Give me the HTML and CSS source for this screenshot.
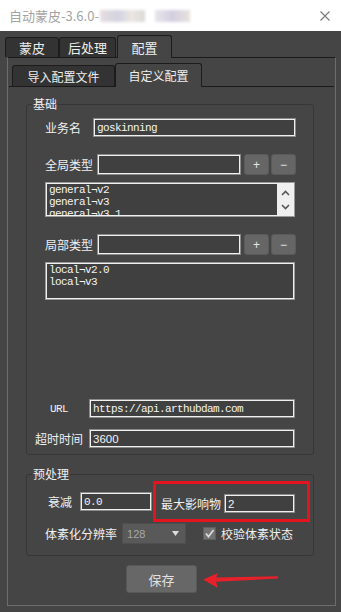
FILE: index.html
```html
<!DOCTYPE html>
<html>
<head>
  <title>自动蒙皮</title>
  <meta name="viewport" content="width=device-width, initial-scale=1.0" />
  <link rel="stylesheet" href="styles.css">
</head>
<body>

  <div class="titlebar">
    <span class="title">自动蒙皮-3.6.0-</span>
    <span class="blur b1"></span>
    <span class="blur b2"></span>
    <svg class="close" width="10" height="10" viewBox="0 0 10 10">
      <path d="M0.5 0.5 L9.5 9.5 M9.5 0.5 L0.5 9.5" stroke="#7a7a7a" stroke-width="1.1" fill="none"/>
    </svg>
  </div>

  <div class="tabs">
    <div class="tab t-skin">蒙皮</div>
    <div class="tab t-post">后处理</div>
    <div class="tab t-conf active">配置</div>
  </div>

  <div class="pane">
    <div class="subtabs">
      <div class="tab sub t-import">导入配置文件</div>
      <div class="tab sub t-custom active">自定义配置</div>
    </div>

    <div class="subpane">
      <div class="group basic">
        <div class="group-title">基础</div>

        <div class="row r-name">
          <span class="label l-name">业务名</span>
          <div class="field mono f-name">goskinning</div>
        </div>

        <div class="row r-type">
          <span class="label l-type">全局类型</span>
          <div class="field f-type"></div>
          <div class="btn">+</div>
          <div class="btn">−</div>
        </div>

        <div class="list list-global">
          <div class="list-items mono">
            <div>general¬v2</div>
            <div>general¬v3</div>
            <div>general¬v3.1</div>
          </div>
          <div class="scrollbar">
            <svg width="9" height="6" viewBox="0 0 9 6"><path d="M1 5 L4.5 1.5 L8 5" stroke="#555" stroke-width="1.6" fill="none"/></svg>
            <svg width="9" height="6" viewBox="0 0 9 6"><path d="M1 1 L4.5 4.5 L8 1" stroke="#555" stroke-width="1.6" fill="none"/></svg>
          </div>
        </div>

        <div class="row r-local">
          <span class="label l-type">局部类型</span>
          <div class="field f-type"></div>
          <div class="btn">+</div>
          <div class="btn">−</div>
        </div>

        <div class="list list-local">
          <div class="list-items mono">
            <div>local¬v2.0</div>
            <div>local¬v3</div>
          </div>
        </div>

        <div class="row r-url">
          <span class="label l-center mono-label">URL</span>
          <div class="field mono f-url">https://api.arthubdam.com</div>
        </div>

        <div class="row r-timeout">
          <span class="label l-center">超时时间</span>
          <div class="field sans f-url">3600</div>
        </div>
      </div>

      <div class="group pre">
        <div class="group-title">预处理</div>

        <div class="row r-decay">
          <span class="label l-decay">衰减</span>
          <div class="field mono f-small">0.0</div>
          <div class="highlight">
            <span class="label">最大影响物</span>
            <div class="field sans f-max">2</div>
          </div>
        </div>

        <div class="row r-voxel">
          <span class="label">体素化分辨率</span>
          <div class="combo">
            <span>128</span>
            <svg width="7" height="5" viewBox="0 0 7 5"><path d="M0 0 L7 0 L3.5 5 Z" fill="#dcdcdc"/></svg>
          </div>
          <div class="check">
            <svg width="11" height="11" viewBox="0 0 11 11"><path d="M2 5.5 L4.5 8.5 L9.5 2" stroke="#dadada" stroke-width="1.8" fill="none"/></svg>
          </div>
          <span class="label">校验体素状态</span>
        </div>
      </div>

      <div class="save-row">
        <div class="save">保存</div>
        <svg class="arrow" width="76" height="17" viewBox="0 0 76 17">
          <polygon points="0,7.5 15,1 13,5.6 75,4.2 75,6.6 13,9.8 15,16" fill="#e8202a"/>
        </svg>
      </div>
    </div>
  </div>

</body>
</html>
```

FILE: styles.css
```css
body {
  margin: 0;
  width: 341px;
  height: 612px;
  overflow: hidden;
  background: #454545;
  font-family: "Noto Sans CJK SC", sans-serif;
  font-size: 12px;
  color: #f0f0f0;
}

/* title bar */
.titlebar {
  height: 31px;
  background: #fff;
  display: flex;
  align-items: center;
  padding-left: 9px;
}

.title {
  color: #a3a3a3;
  font-size: 13px;
}

.blur {
  display: inline-block;
  height: 12px;
  filter: blur(1.6px);
}

.b1 {
  width: 45px;
  margin-left: 1px;
  background: linear-gradient(90deg, #e6dde0, #d3d3e0 40%, #ebe6e2 70%, #d9d9d9);
}

.b2 {
  width: 35px;
  margin-left: 10px;
  background: linear-gradient(90deg, #e6e6ea, #d4cee0 50%, #e6e2da);
}

.close {
  margin-left: auto;
  margin-right: 11px;
}

/* tabs */
.tabs, .subtabs {
  display: flex;
  align-items: flex-end;
}

.tabs {
  margin-top: 4px;
  padding-left: 5px;
}

.tab {
  box-sizing: border-box;
  height: 20px;
  display: flex;
  align-items: center;
  justify-content: center;
  background: #333;
  border: 1px solid #1c1c1c;
  border-bottom: none;
  border-radius: 3px 3px 0 0;
  color: #eee;
  font-size: 13px;
}

.tab.active {
  height: 23px;
  margin-bottom: -1px;
  background: #454545;
  position: relative;
}

.t-skin { width: 54px; }
.t-post { width: 57px; }
.t-conf { width: 55px; margin-left: 1px; }

.pane {
  box-sizing: border-box;
  width: 329px;
  height: 549px;
  margin-left: 7px;
  border: 1px solid #6c6c6c;
  border-top-color: #1a1a1a;
}

.subtabs {
  padding: 5px 0 0 4px;
}

.tab.sub {
  height: 21px;
  font-size: 12px;
}

.tab.sub.active {
  height: 24px;
}

.t-import { width: 103px; }
.t-custom { width: 87px; }

.subpane {
  margin: 0 1px;
  border-top: 1px solid #1a1a1a;
}

/* group boxes */
.group {
  position: relative;
  box-sizing: border-box;
  width: 288px;
  margin-left: 17px;
  border: 1px solid #363636;
  border-radius: 3px;
  padding-left: 18px;
}

.group-title {
  position: absolute;
  left: 5px;
  top: -9px;
  padding: 0 1px;
  background: #454545;
  line-height: 16px;
  font-size: 12px;
}

.basic {
  margin-top: 17px;
  padding-top: 13px;
  padding-bottom: 6px;
}

.pre {
  margin-top: 19px;
  padding-top: 6px;
  padding-bottom: 11px;
}

.row {
  display: flex;
  align-items: center;
}

.label {
  white-space: nowrap;
  line-height: 16px;
}

.field {
  box-sizing: border-box;
  height: 19px;
  border: 1px solid #8a8a8a;
  box-shadow: inset 0 0 0 1px #f0f0f0;
  background: #404040;
  padding-left: 3px;
  display: flex;
  align-items: center;
  color: #f4f4f4;
  white-space: nowrap;
}

.mono {
  font-family: "Liberation Mono", monospace;
  font-size: 11px;
  letter-spacing: -0.6px;
}

.sans {
  font-family: "Liberation Sans", sans-serif;
  font-size: 11.5px;
}

.mono-label {
  font-family: "Liberation Mono", monospace;
  font-size: 11px;
  letter-spacing: -0.6px;
}

.r-name .field { height: 19px; }
.l-name { width: 48px; }
.f-name { width: 203px; }

.r-type, .r-local { height: 21px; }
.r-type { margin-top: 17px; }
.r-local { margin-top: 17px; }
.l-type { width: 52px; }
.f-type { width: 144px; height: 21px; }

.btn {
  box-sizing: border-box;
  width: 25px;
  height: 21px;
  margin-left: 2px;
  background: #666;
  border: 1px solid #5a5a5a;
  border-radius: 3px;
  display: flex;
  align-items: center;
  justify-content: center;
  color: #e6e6e6;
  font-family: "Liberation Sans", sans-serif;
  font-size: 12px;
}

.r-type .f-type + .btn,
.r-local .f-type + .btn { margin-left: 3px; }

.list {
  box-sizing: border-box;
  width: 250px;
  margin-top: 7px;
  border: 1px solid #999;
  box-shadow: inset 0 0 0 1px #f0f0f0;
  background: #404040;
  display: flex;
  overflow: hidden;
}

.list-global { height: 35px; }
.list-local { height: 38px; }

.list-items {
  flex: 1;
  padding: 1px 0 0 3px;
  line-height: 12px;
  color: #f4f4f4;
  overflow: hidden;
}

.scrollbar {
  width: 16px;
  margin: 1px 1px 1px 0;
  background: #efefef;
  display: flex;
  flex-direction: column;
  align-items: center;
  justify-content: space-between;
  padding: 6px 0 5px;
}

.r-url { margin-top: 99px; }
.r-timeout { margin-top: 11px; }
.l-center {
  width: 54px;
  margin-left: -10px;
  text-align: center;
  padding-right: 6px;
  box-sizing: border-box;
}
.f-url { width: 206px; }

/* preprocessing */
.r-decay { height: 41px; }
.l-decay { width: 35px; padding-left: 3px; box-sizing: border-box; }
.f-small { width: 72px; }

.highlight {
  box-sizing: border-box;
  width: 157px;
  height: 41px;
  margin-left: 1px;
  border: 3px solid #e4141f;
  padding-left: 5px;
  display: flex;
  align-items: center;
  padding-top: 4px;
}

.f-max { width: 71px; margin-left: 3px; }

.r-voxel { margin-top: 1px; height: 21px; }

.combo {
  box-sizing: border-box;
  width: 64px;
  height: 21px;
  margin-left: 5px;
  background: #595959;
  border: 1px solid #4e4e4e;
  display: flex;
  align-items: center;
  justify-content: space-between;
  padding: 0 6px 0 4px;
  color: #a8a8a8;
  font-family: "Liberation Sans", sans-serif;
  font-size: 11px;
}

.check {
  box-sizing: border-box;
  width: 13px;
  height: 13px;
  margin-left: 17px;
  margin-right: 5px;
  background: #727272;
  border: 1px solid #5e5e5e;
  display: flex;
  align-items: center;
  justify-content: center;
}

/* save */
.save-row {
  display: flex;
  align-items: center;
  margin-top: 9px;
  margin-left: 117px;
}

.save {
  box-sizing: border-box;
  width: 71px;
  height: 28px;
  background: #676767;
  border: 1px solid #585858;
  border-radius: 3px;
  display: flex;
  align-items: center;
  justify-content: center;
  color: #e0e0e0;
  font-size: 13px;
}

.arrow {
  margin-left: 6px;
  margin-top: 2px;
}
```
